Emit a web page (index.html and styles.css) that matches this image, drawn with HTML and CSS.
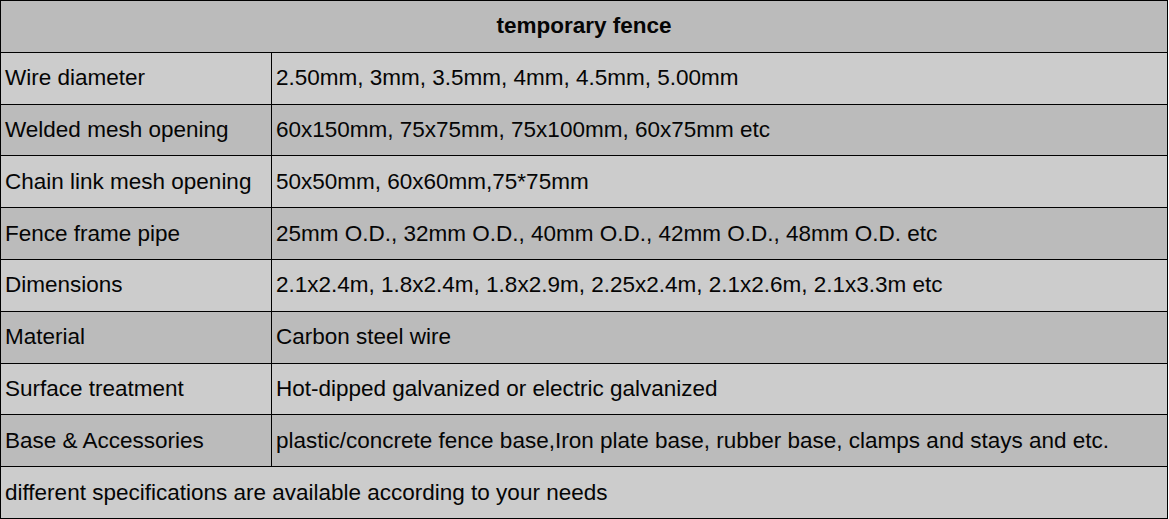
FILE: index.html
```html
<!DOCTYPE html>
<html>
<head>
<meta charset="utf-8">
<link rel="stylesheet" href="styles.css">
</head>
<body>
<table class="spec">
  <colgroup><col class="col-label"><col class="col-value"></colgroup>
  <tr class="dark"><th colspan="2" class="title">temporary fence</th></tr>
  <tr class="light"><td>Wire diameter</td><td>2.50mm, 3mm, 3.5mm, 4mm, 4.5mm, 5.00mm</td></tr>
  <tr class="dark"><td>Welded mesh opening</td><td>60x150mm, 75x75mm, 75x100mm, 60x75mm etc</td></tr>
  <tr class="light"><td>Chain link mesh opening</td><td>50x50mm, 60x60mm,75*75mm</td></tr>
  <tr class="dark"><td>Fence frame pipe</td><td>25mm O.D., 32mm O.D., 40mm O.D., 42mm O.D., 48mm O.D. etc</td></tr>
  <tr class="light"><td>Dimensions</td><td>2.1x2.4m, 1.8x2.4m, 1.8x2.9m, 2.25x2.4m, 2.1x2.6m, 2.1x3.3m etc</td></tr>
  <tr class="dark"><td>Material</td><td>Carbon steel wire</td></tr>
  <tr class="light"><td>Surface treatment</td><td>Hot-dipped galvanized or electric galvanized</td></tr>
  <tr class="dark"><td>Base &amp; Accessories</td><td>plastic/concrete fence base,Iron plate base, rubber base, clamps and stays and etc.</td></tr>
  <tr class="light"><td colspan="2">different specifications are available according to your needs</td></tr>
</table>
</body>
</html>
```
FILE: styles.css
```css
html, body {
  margin: 0;
  padding: 0;
  background: #ffffff;
}
.spec {
  border-collapse: collapse;
  width: 1168px;
  height: 519px;
  font-family: "Liberation Sans", Arial, sans-serif;
  font-size: 22.5px;
  color: #050505;
  table-layout: fixed;
}
.col-label {
  width: 271px;
}
.spec td, .spec th {
  border: 1px solid #000;
  padding: 0 4px;
  text-align: left;
  vertical-align: middle;
  font-weight: normal;
  white-space: nowrap;
}
.spec th.title {
  text-align: center;
  font-weight: bold;
}
.dark {
  background: #bbbbbb;
}
.light {
  background: #cccccc;
}
```
